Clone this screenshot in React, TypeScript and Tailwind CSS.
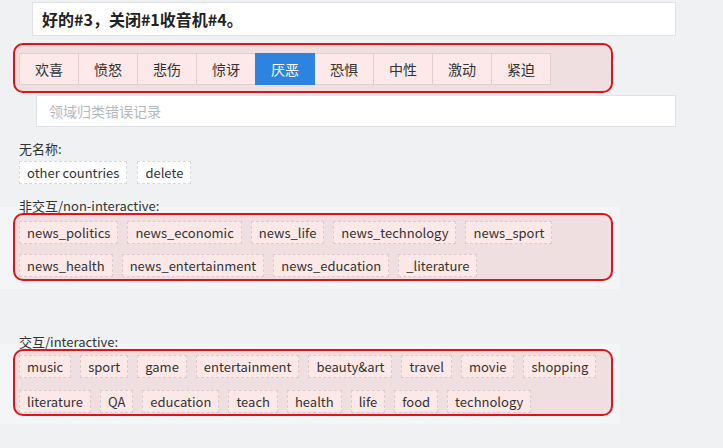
import React from 'react';

const emotions = ['欢喜', '愤怒', '悲伤', '惊讶', '厌恶', '恐惧', '中性', '激动', '紧迫'];
const nonInteractive = [
    ['news_politics', 'news_economic', 'news_life', 'news_technology', 'news_sport'],
    ['news_health', 'news_entertainment', 'news_education', '_literature'],
];
const interactive = [
    ['music', 'sport', 'game', 'entertainment', 'beauty&art', 'travel', 'movie', 'shopping'],
    ['literature', 'QA', 'education', 'teach', 'health', 'life', 'food', 'technology'],
];

const Tag: React.FC<{ label: string; marked?: boolean }> = ({ label, marked }) => (
    <span
        className={`h-[23px] px-[7px] border border-dashed text-[13px] leading-[21px] text-[#333] whitespace-nowrap ${
            marked ? 'bg-[#fde8e8] border-[#dccacd]' : 'bg-white border-[#d6d9de]'
        }`}
    >
        {label}
    </span>
);

const TagBox: React.FC<{ rows: string[][]; pt: string; gap: string; h: string }> = ({ rows, pt, gap, h }) => (
    <div className={`-mt-[1px] ml-[13px] w-[600px] ${h} border-2 border-[#e0121c] rounded-[10px] bg-[#efdfe1] pl-[4px] ${pt} flex flex-col ${gap}`}>
        {rows.map((row, i) => (
            <div key={i} className="flex gap-x-[9px]">
                {row.map(t => (
                    <Tag key={t} label={t} marked />
                ))}
            </div>
        ))}
    </div>
);

export default function App() {
    return (
        <div
            className="w-[723px] h-[448px] bg-[#eff1f3] overflow-hidden text-[#333]"
            style={{ fontFamily: '"Noto Sans CJK SC", "Noto Sans", sans-serif' }}
        >
            <div className="pt-[2px] flex flex-col">
                <div className="ml-[32px] w-[644px] h-[34px] bg-white border border-[#dfe2e6] flex items-center pl-[9px] text-[16px] font-bold text-[#222]">
                    好的#3，关闭#1收音机#4。
                </div>

                {/* emotion selector */}
                <div className="mt-[7px] ml-[13px] w-[600px] h-[50px] border-2 border-[#e0121c] rounded-[10px] bg-[#efdfe1] pl-[4px] pt-[8px]">
                    <div className="flex">
                        {emotions.map((e, i) => (
                            <div
                                key={e}
                                className={`w-[60px] h-[32px] flex items-center justify-center text-[14px] border ${
                                    i === 0 ? '' : '-ml-px'
                                } ${
                                    e === '厌恶'
                                        ? 'bg-[#2d83e0] border-[#2d83e0] text-white relative'
                                        : 'bg-[#fde9e9] border-[#e2cdd0] text-[#333]'
                                }`}
                            >
                                {e}
                            </div>
                        ))}
                    </div>
                </div>

                <div className="mt-[2px] ml-[36px] w-[640px] h-[32px] bg-white border border-[#dfe2e6] flex items-center pl-[12px] text-[14px] text-[#b4b8bf]">
                    领域归类错误记录
                </div>

                <div className="ml-[19px] mt-[13px] text-[13px] leading-[18px]">无名称:</div>
                <div className="ml-[19px] mt-[3px] flex gap-x-[10px]">
                    <Tag label="other countries" />
                    <Tag label="delete" />
                </div>

                <div className="mt-[23px] w-[620px] bg-[#f3f5f7] pb-[8px] flex flex-col">
                    <div className="-mt-[9px] ml-[19px] text-[13px] leading-[16px] h-[16px]">非交互/non-interactive:</div>
                    <TagBox rows={nonInteractive} pt="pt-[6px]" gap="gap-y-[10px]" h="h-[68px]" />
                </div>

                <div className="mt-[55px] w-[620px] bg-[#f3f5f7] pb-[8px] flex flex-col">
                    <div className="-mt-[10px] ml-[19px] text-[13px] leading-[16px] h-[16px]">交互/interactive:</div>
                    <TagBox rows={interactive} pt="pt-[4px]" gap="gap-y-[12px]" h="h-[67px]" />
                </div>
            </div>
        </div>
    );
}
